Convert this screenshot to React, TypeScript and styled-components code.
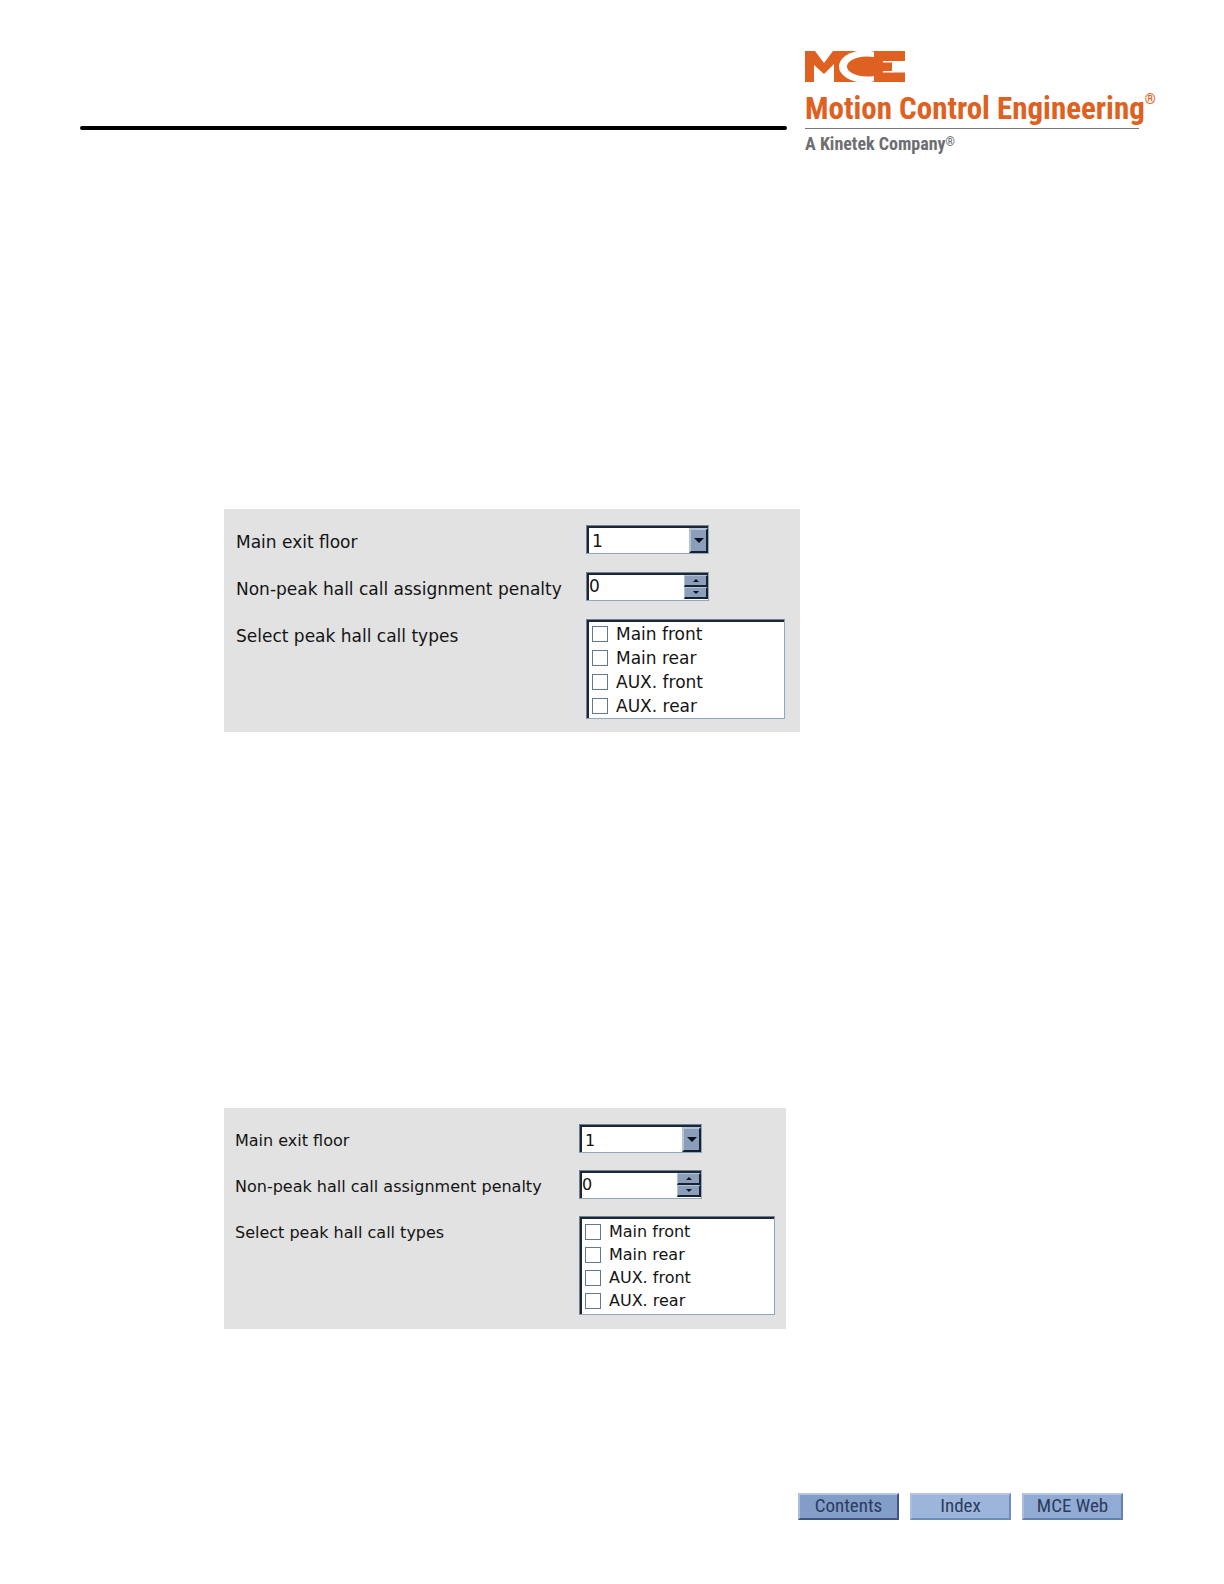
import React, { useId, useState } from "react";
import styled, { createGlobalStyle } from "styled-components";

const GlobalStyle = createGlobalStyle`
  *, *::before, *::after { box-sizing: border-box; }
  body { margin: 0; background: #fff; }
`;

const Page = styled.div`
  display: flex;
  flex-direction: column;
  min-height: 100vh;
  padding: 51px 72px 64px 80px;
  color: #141414;
  font-family: "DejaVu Sans", Verdana, sans-serif;
`;

const Header = styled.header`
  display: flex;
  align-items: flex-start;
  gap: 18px;
`;

const HeaderRule = styled.hr`
  flex: 1;
  height: 4px;
  margin: 75px 0 0;
  border: 0;
  border-radius: 2px;
  background: #000;
`;

const Brand = styled.div`
  display: flex;
  flex-direction: column;
  width: 347px;
  font-family: "Roboto Condensed", "Arial Narrow", sans-serif;
  font-weight: 700;
  white-space: nowrap;
`;

const Mark = styled.svg`
  display: block;
  width: 100px;
  height: 31px;
`;

const BrandName = styled.div`
  display: flex;
  align-items: flex-start;
  margin-top: 8px;
  color: #de6121;
  font-size: 31px;
  line-height: 38px;
`;

const Registered = styled.span<{ $size: number }>`
  font-size: ${(p) => p.$size}px;
  line-height: ${(p) => p.$size + 4}px;
`;

const BrandRule = styled.div`
  height: 1px;
  margin: 0 13px 0 0;
  background: #77787b;
`;

const Tagline = styled.div`
  display: flex;
  align-items: flex-start;
  margin-top: 5px;
  color: #6d6e71;
  font-size: 18px;
  line-height: 20px;
`;

const Main = styled.main`
  display: flex;
  flex: 1;
  flex-direction: column;
  align-items: flex-start;
  gap: 376px;
  padding: 355px 0 0 144px;
`;

const Panel = styled.form<{ $compact: boolean }>`
  display: grid;
  grid-template-columns: ${(p) => (p.$compact ? "344px 196px" : "350px 199px")};
  row-gap: ${(p) => (p.$compact ? 17 : 18)}px;
  padding: ${(p) => (p.$compact ? "16px 11px 14px 11px" : "16px 15px 13px 12px")};
  background: #e2e2e2;
  font-size: ${(p) => (p.$compact ? 16 : 17)}px;
`;

const Label = styled.label`
  padding-top: 7px;
  line-height: 20px;
`;

const GroupLabel = styled.span`
  padding-top: 7px;
  line-height: 20px;
`;

const Field = styled.div`
  position: relative;
  display: flex;
  width: 123px;
  height: 29px;
  border: 1px solid #8fa6bd;
  border-top-color: #6d8095;
  border-left-color: #6d8095;
  background: #fff;
  box-shadow: inset 2px 2px 0 #1d2733;
`;

const Select = styled.select`
  flex: 1;
  min-width: 0;
  padding: 3px 24px 0 5px;
  border: 0;
  appearance: none;
  background: transparent;
  color: inherit;
  font: inherit;
`;

const Arrow = styled.span`
  position: absolute;
  top: 2px;
  right: 0;
  bottom: 0;
  display: grid;
  place-items: center;
  width: 19px;
  border: 2px solid #16222f;
  border-top-color: #b4c4d8;
  border-left-color: #b4c4d8;
  background: #8b9fba;
  pointer-events: none;
`;

const NumberInput = styled.input`
  flex: 1;
  min-width: 0;
  padding: 0 0 1px 2px;
  border: 0;
  appearance: textfield;
  background: transparent;
  color: inherit;
  font: inherit;
  &::-webkit-inner-spin-button { appearance: none; margin: 0; }
`;

const Steps = styled.div`
  display: flex;
  flex-direction: column;
  width: 24px;
  padding: 2px 0 1px;
`;

const Step = styled.button`
  display: grid;
  flex: 1;
  place-items: center;
  padding: 0;
  border: 1px solid #16222f;
  border-width: 1px 2px 2px 1px;
  border-top-color: #b4c4d8;
  border-left-color: #b4c4d8;
  background: #8b9fba;
`;

const List = styled.div<{ $compact: boolean }>`
  display: grid;
  grid-auto-rows: ${(p) => (p.$compact ? 23 : 24)}px;
  padding: ${(p) => (p.$compact ? "3px 0 2px" : "2px 0 0")};
  border: 1px solid #8fa6bd;
  border-top-color: #6d8095;
  border-left-color: #6d8095;
  background: #fff;
  box-shadow: inset 2px 2px 0 #1d2733;
`;

const Option = styled.label`
  display: flex;
  align-items: center;
  gap: 8px;
  padding-left: 5px;
  line-height: 20px;
`;

const Checkbox = styled.input`
  width: 16px;
  height: 16px;
  margin: 0;
  border: 1px solid #64779a;
  appearance: none;
  background: #fff;
  &:checked { box-shadow: inset 0 0 0 3px #fff; background: #1d2733; }
`;

const Footer = styled.footer`
  display: flex;
  justify-content: flex-end;
  gap: 11px;
  padding-right: 29px;
`;

const NavLink = styled.a<{ $edge: string; $face: string }>`
  width: 101px;
  height: 27px;
  border: 2px solid ${(p) => p.$edge};
  border-top-color: #b3c6e2;
  border-left-color: #a9bedb;
  background: ${(p) => p.$face};
  color: #2b3c5c;
  font: 19px/21px "Roboto Condensed", "Arial Narrow", sans-serif;
  text-align: center;
  text-decoration: none;
`;

function LogoMark() {
  return (
    <Mark viewBox="0 0 100 31" role="img" aria-label="MCE">
      <defs>
        <clipPath id="ring-clip">
          <rect width="69" height="31" />
        </clipPath>
      </defs>
      <rect width="100" height="31" fill="#de6121" />
      <g fill="#fff">
        <polygon points="10,0 28,0 19,12" />
        <polygon points="9,31 9,14 19,23 29,13 29,31" />
        <rect x="87" y="10" width="13" height="11.5" />
        <rect x="78" y="10" width="10" height="1.5" />
        <rect x="78" y="20" width="10" height="1.5" />
      </g>
      <g clipPath="url(#ring-clip)">
        <ellipse cx="59" cy="15.5" rx="25" ry="16" fill="#fff" />
        <ellipse cx="62" cy="15.5" rx="20" ry="10" fill="#de6121" />
      </g>
    </Mark>
  );
}

function Triangle({ up = false, size = 8 }: { up?: boolean; size?: number }) {
  return (
    <svg width={size} height={size / 2} viewBox="0 0 8 4" aria-hidden="true">
      <path d={up ? "M0 4L4 0L8 4Z" : "M0 0H8L4 4Z"} fill="#0b121b" />
    </svg>
  );
}

const callTypes = ["Main front", "Main rear", "AUX. front", "AUX. rear"];

function SettingsPanel({ compact = false }: { compact?: boolean }) {
  const id = useId();
  const [penalty, setPenalty] = useState(0);
  return (
    <Panel $compact={compact} onSubmit={(e) => e.preventDefault()}>
      <Label htmlFor={`${id}-floor`}>Main exit floor</Label>
      <Field>
        <Select id={`${id}-floor`} defaultValue="1">
          <option>1</option>
          <option>2</option>
        </Select>
        <Arrow><Triangle size={10} /></Arrow>
      </Field>
      <Label htmlFor={`${id}-penalty`}>Non-peak hall call assignment penalty</Label>
      <Field>
        <NumberInput
          id={`${id}-penalty`}
          type="number"
          min={0}
          value={penalty}
          onChange={(e) => setPenalty(Number(e.target.value))}
        />
        <Steps>
          <Step type="button" aria-label="Increase" onClick={() => setPenalty(penalty + 1)}>
            <Triangle up size={6} />
          </Step>
          <Step type="button" aria-label="Decrease" onClick={() => setPenalty(Math.max(0, penalty - 1))}>
            <Triangle size={6} />
          </Step>
        </Steps>
      </Field>
      <GroupLabel id={`${id}-types`}>Select peak hall call types</GroupLabel>
      <List $compact={compact} role="group" aria-labelledby={`${id}-types`}>
        {callTypes.map((type) => (
          <Option key={type}>
            <Checkbox type="checkbox" />
            {type}
          </Option>
        ))}
      </List>
    </Panel>
  );
}

export default function App() {
  return (
    <>
      <GlobalStyle />
      <Page>
        <Header>
          <HeaderRule />
          <Brand>
            <LogoMark />
            <BrandName>
              Motion Control Engineering<Registered $size={14}>®</Registered>
            </BrandName>
            <BrandRule />
            <Tagline>
              A Kinetek Company<Registered $size={12}>®</Registered>
            </Tagline>
          </Brand>
        </Header>
        <Main>
          <SettingsPanel />
          <SettingsPanel compact />
        </Main>
        <Footer>
          <NavLink href="#contents" $edge="#3f5780" $face="#819dc8">Contents</NavLink>
          <NavLink href="#index" $edge="#6f8db8" $face="#9db5db">Index</NavLink>
          <NavLink href="#web" $edge="#6480ad" $face="#92abd5">MCE Web</NavLink>
        </Footer>
      </Page>
    </>
  );
}
